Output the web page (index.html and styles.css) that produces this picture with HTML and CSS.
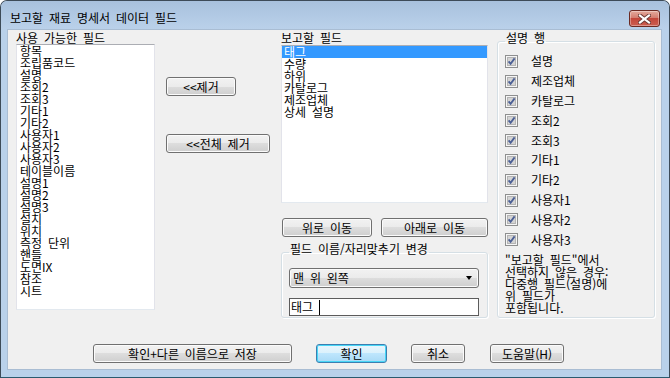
FILE: index.html
```html
<!DOCTYPE html>
<html lang="ko">
  <head>
    <meta charset="UTF-8" />
    <meta name="viewport" content="width=device-width, initial-scale=1.0" />
    <title>보고할 재료 명세서 데이터 필드</title>
    <link rel="stylesheet" href="styles.css">
  </head>
  <body>
    <svg class="defs" width="0" height="0">
      <symbol id="check" viewBox="0 0 13 13">
        <rect x="0.5" y="0.5" width="12" height="12" fill="#f6f6f6" stroke="#8e8f8f" />
        <rect x="2.5" y="2.5" width="8" height="8" fill="#d4d4d4" stroke="#b4b4b4" />
        <path d="M3.6 6.4 L5.6 8.8 L9.6 3.4" fill="none" stroke="#4b5f95" stroke-width="1.8" />
      </symbol>
    </svg>

    <div class="window">
      <div class="titlebar">
        <span class="title">보고할 재료 명세서 데이터 필드</span>
        <div class="close">
          <svg width="13" height="10" viewBox="0 0 13 10">
            <path d="M2 1.5 L11 8.5 M11 1.5 L2 8.5" stroke="#6a3a35" stroke-width="4" stroke-linecap="square" />
            <path d="M2 1.5 L11 8.5 M11 1.5 L2 8.5" stroke="#fff" stroke-width="2.2" stroke-linecap="square" />
          </svg>
        </div>
      </div>

      <div class="client">
        <div class="main">
          <div class="col col-avail">
            <div class="label">사용 가능한 필드</div>
            <ul class="listbox list-avail">
              <li>항목</li>
              <li>조립품코드</li>
              <li>설명</li>
              <li>조회2</li>
              <li>조회3</li>
              <li>기타1</li>
              <li>기타2</li>
              <li>사용자1</li>
              <li>사용자2</li>
              <li>사용자3</li>
              <li>테이블이름</li>
              <li>설명1</li>
              <li>설명2</li>
              <li>설명3</li>
              <li>설치</li>
              <li>위치</li>
              <li>측정 단위</li>
              <li>핸들</li>
              <li>도면IX</li>
              <li>참조</li>
              <li>시트</li>
            </ul>
          </div>

          <div class="col col-remove">
            <button class="btn btn-remove">&lt;&lt;제거</button>
            <button class="btn btn-remove-all">&lt;&lt;전체 제거</button>
          </div>

          <div class="col col-report">
            <div class="label label-report">보고할 필드</div>
            <ul class="listbox list-report">
              <li class="selected">태그</li>
              <li>수량</li>
              <li>하위</li>
              <li>카탈로그</li>
              <li>제조업체</li>
              <li>상세 설명</li>
            </ul>
            <div class="move-row">
              <button class="btn btn-up">위로 이동</button>
              <button class="btn btn-down">아래로 이동</button>
            </div>
            <fieldset class="group group-rename">
              <legend>필드 이름/자리맞추기 변경</legend>
              <div class="combo">
                <span>맨 위 왼쪽</span>
                <span class="arrow"></span>
              </div>
              <div class="textbox">태그<span class="caret"></span></div>
            </fieldset>
          </div>

          <fieldset class="group group-rows">
            <legend>설명 행</legend>
            <ul class="checks">
              <li><svg class="chk"><use href="#check" /></svg><span>설명</span></li>
              <li><svg class="chk"><use href="#check" /></svg><span>제조업체</span></li>
              <li><svg class="chk"><use href="#check" /></svg><span>카탈로그</span></li>
              <li><svg class="chk"><use href="#check" /></svg><span>조회2</span></li>
              <li><svg class="chk"><use href="#check" /></svg><span>조회3</span></li>
              <li><svg class="chk"><use href="#check" /></svg><span>기타1</span></li>
              <li><svg class="chk"><use href="#check" /></svg><span>기타2</span></li>
              <li><svg class="chk"><use href="#check" /></svg><span>사용자1</span></li>
              <li><svg class="chk"><use href="#check" /></svg><span>사용자2</span></li>
              <li><svg class="chk"><use href="#check" /></svg><span>사용자3</span></li>
            </ul>
            <p class="note">"보고할 필드"에서<br>선택하지 않은 경우:<br>다중행 필드(설명)에<br>위 필드가<br>포함됩니다.</p>
          </fieldset>
        </div>

        <div class="footer">
          <button class="btn btn-saveas">확인+다른 이름으로 저장</button>
          <button class="btn btn-default">확인</button>
          <button class="btn btn-cancel">취소</button>
          <button class="btn btn-help">도움말(H)</button>
        </div>
      </div>
    </div>
  </body>
</html>
```

FILE: styles.css
```css
* {
    box-sizing: border-box;
}

body {
    margin: 0;
    background: #fff;
    font-family: "Noto Sans CJK KR", "Noto Sans", sans-serif;
    font-size: 12px;
    line-height: 12px;
    word-spacing: 2.5px;
    color: #000;
}

.defs {
    position: absolute;
}

.window {
    width: 670px;
    height: 378px;
    border: 1px solid #3d4b58;
    border-bottom-color: #2a5a6e;
    border-radius: 7px 7px 0 0;
    background: #b9d1ea;
    display: flex;
    flex-direction: column;
    overflow: hidden;
}

/* title bar */

.titlebar {
    height: 28px;
    display: flex;
    align-items: flex-start;
    padding: 0 9px;
    background: linear-gradient(#a8c1dd, #bad1ea);
}

.title {
    margin-top: 11px;
    white-space: nowrap;
}

.close {
    margin-left: auto;
    margin-top: 9px;
    width: 31px;
    height: 17px;
    border: 1px solid #6b2a22;
    border-radius: 3px;
    background: linear-gradient(#e3aa9c 0%, #d47e70 45%, #c3473a 50%, #cc5e50 100%);
    box-shadow: inset 0 0 0 1px rgba(255, 255, 255, 0.35);
    display: flex;
    align-items: center;
    justify-content: center;
}

/* client area */

.client {
    margin: 0 7px 7px 6px;
    height: 341px;
    border: 1px solid #a9bdd3;
    background: #f0f0f0;
    padding: 2px 0 0 8px;
}

.main {
    display: flex;
    align-items: flex-start;
    height: 286px;
}

.label {
    height: 12px;
    white-space: nowrap;
}

.listbox {
    list-style: none;
    margin: 0;
    padding: 0;
    background: #fff;
    border: 1px solid;
    border-color: #abadb3 #e2e3ea #e3e9ef;
}

.listbox li {
    height: 12px;
    white-space: nowrap;
}

/* buttons */

.btn {
    height: 19px;
    padding: 0;
    font: inherit;
    word-spacing: inherit;
    line-height: 17px;
    color: #000;
    border: 1px solid #707070;
    border-radius: 3px;
    background: linear-gradient(#f2f2f2 0%, #ebebeb 50%, #dddddd 50%, #cfcfcf 100%);
    box-shadow: inset 0 0 0 1px #fbfbfb;
    white-space: nowrap;
}

.btn-default {
    border-color: #3c7fb1;
    background: linear-gradient(#e9f6fd 0%, #daf1fc 50%, #bee6fd 50%, #a9daf6 100%);
    box-shadow: inset 0 0 0 1px #48d6f6;
}

.col-avail {
    width: 139px;
}

.list-avail {
    height: 266px;
}

.list-avail li {
    padding-left: 3px;
}

.col-remove {
    margin-left: 11px;
    width: 104px;
    display: flex;
    flex-direction: column;
    align-items: flex-start;
    padding-top: 45px;
}

.btn-remove {
    width: 70px;
}

.btn-remove-all {
    width: 104px;
    margin-top: 38px;
}

.col-report {
    margin-left: 11px;
    width: 207px;
}

.label-report {
    margin-bottom: 1px;
}

.list-report {
    height: 158px;
}

.list-report li {
    padding-left: 2px;
}

.list-report li.selected {
    background: #3399ff;
    color: #fff;
}

.move-row {
    display: flex;
    gap: 9px;
    margin-top: 15px;
    padding-left: 1px;
}

.btn-up {
    width: 90px;
}

.btn-down {
    width: 107px;
}

/* group boxes */

.group {
    margin: 0;
    border: 1px solid #d5dfe5;
    border-radius: 3px;
    box-shadow: 1px 1px 0 #fff, inset 1px 1px 0 #fff;
    min-width: 0;
}

.group legend {
    padding: 0 1px 6px;
    line-height: 12px;
    white-space: nowrap;
}

.group-rename {
    margin-top: 6px;
    width: 207px;
    height: 75px;
    padding: 7px 7px 0;
}

.combo {
    width: 190px;
    height: 20px;
    display: flex;
    align-items: center;
    justify-content: space-between;
    padding: 0 6px 0 3px;
    border: 1px solid #707070;
    border-radius: 3px;
    background: linear-gradient(#f2f2f2 0%, #ebebeb 50%, #dddddd 50%, #cfcfcf 100%);
    box-shadow: inset 0 0 0 1px #fbfbfb;
}

.arrow {
    width: 0;
    height: 0;
    border-left: 3.5px solid transparent;
    border-right: 3.5px solid transparent;
    border-top: 4px solid #000;
}

.textbox {
    width: 190px;
    height: 18px;
    margin-top: 10px;
    border: 1px solid #5c5c5c;
    background: #fff;
    padding-left: 1px;
    display: flex;
    align-items: center;
}

.caret {
    width: 1px;
    height: 15px;
    margin-left: 6px;
    background: #000;
}

.group-rows {
    margin-left: 9px;
    width: 158px;
    height: 286px;
    padding: 1.6px 7px 0;
}

.checks {
    list-style: none;
    margin: 0;
    padding: 0;
}

.checks li {
    height: 19.8px;
    display: flex;
    align-items: center;
}

.chk {
    width: 13px;
    height: 13px;
    flex: none;
}

.checks span {
    margin-left: 13px;
    white-space: nowrap;
}

.note {
    margin: 4.4px 0 0;
    white-space: nowrap;
}

/* footer */

.footer {
    display: flex;
    margin-top: 26px;
    padding-left: 77px;
}

.btn-saveas {
    width: 199px;
}

.btn-default {
    width: 71px;
    margin-left: 24px;
}

.btn-cancel {
    width: 54px;
    margin-left: 24px;
}

.btn-help {
    width: 74px;
    margin-left: 25px;
}
```
